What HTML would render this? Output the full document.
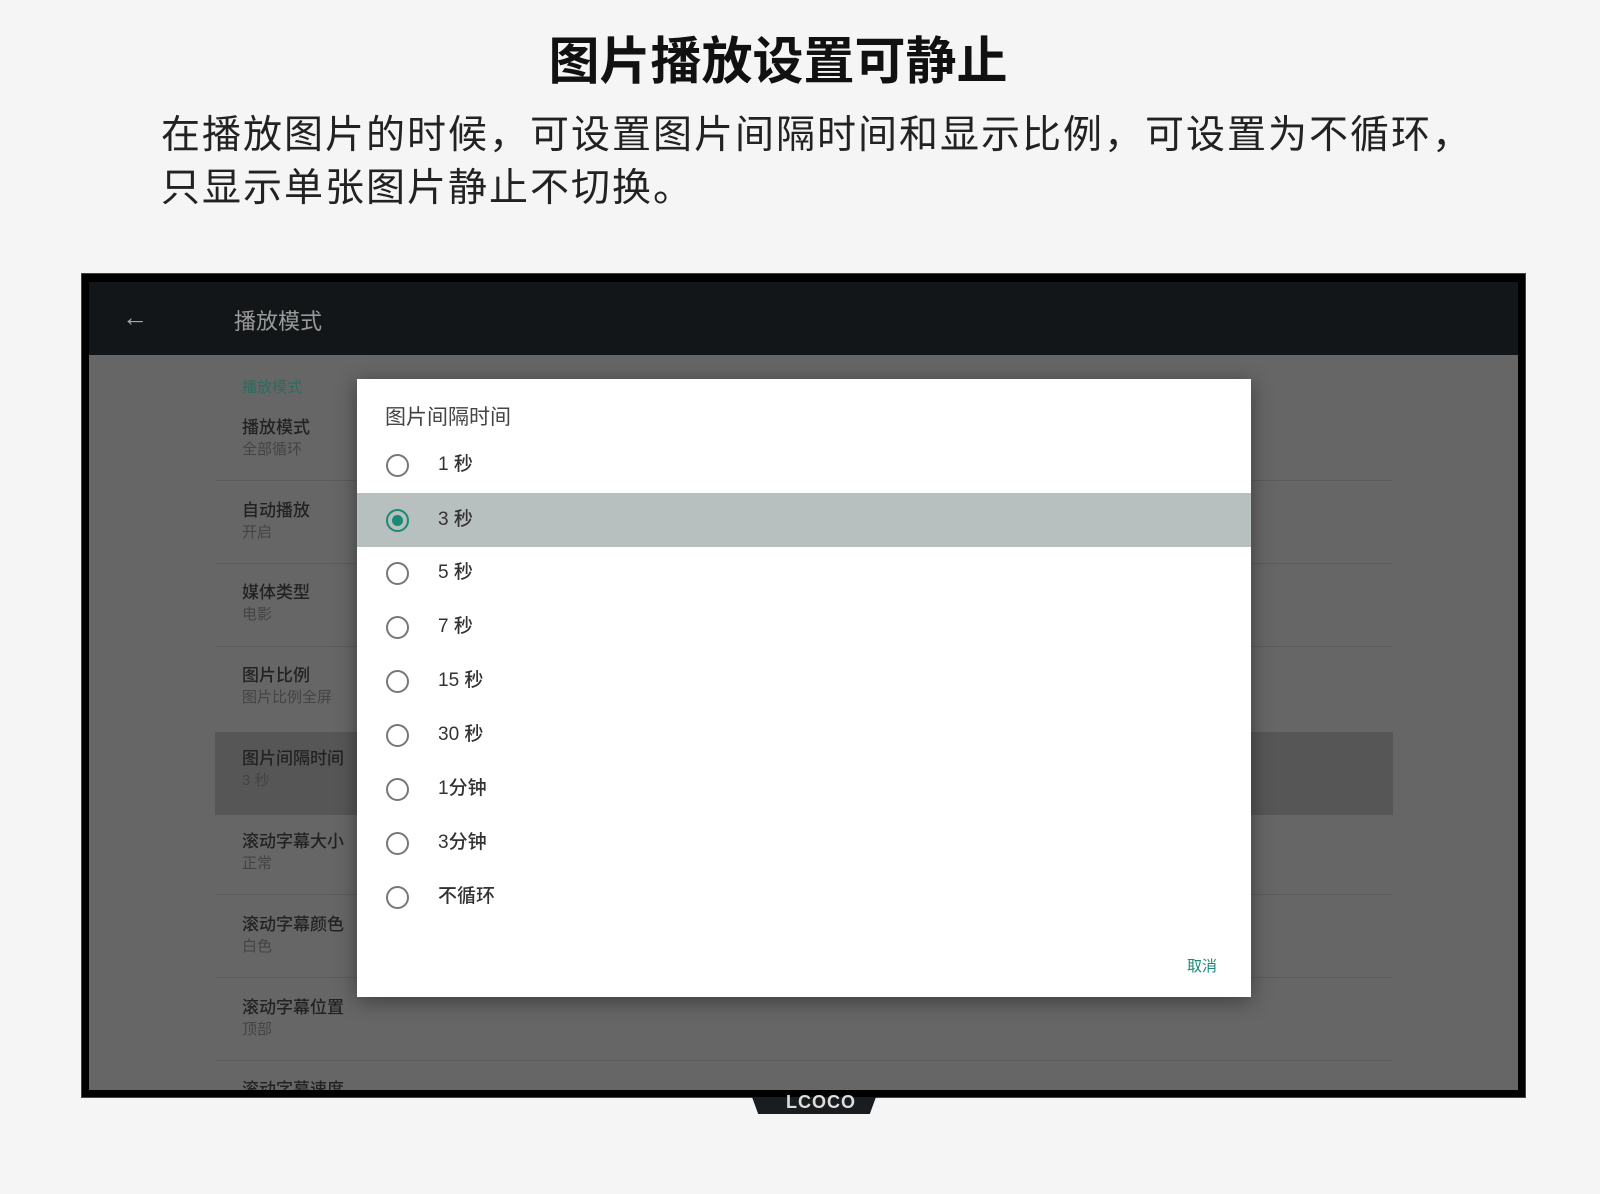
<!DOCTYPE html>
<html><head><meta charset="utf-8"><style>
*{margin:0;padding:0;box-sizing:border-box}
body{width:1600px;height:1194px;background:#f4f5f4;position:relative;overflow:hidden;font-family:"Liberation Sans","Noto Sans CJK SC",sans-serif}
.a{position:absolute;white-space:nowrap}
h1{position:absolute;left:0;width:1556px;text-align:center;top:32px;font-size:51px;font-weight:bold;color:#111;line-height:60px}
.p{left:161px;font-size:39px;color:#222;line-height:50px;letter-spacing:2px}
.tv{position:absolute;left:81px;top:273px;width:1445px;height:825px;background:#000;border:1px solid #444}
.scr{position:absolute;left:7px;top:8px;width:1429px;height:808px;background:#666;overflow:hidden}
.hd{position:absolute;left:0;top:0;width:100%;height:73px;background:#131618}
.it{position:absolute;left:153px;font-size:17px;color:#222;line-height:22px;font-weight:500}
.it span{display:block;font-size:15px;color:#444;font-weight:normal}
.ln{position:absolute;left:126px;width:1178px;height:1px;background:#5c5c5c}
.dl{position:absolute;left:357px;top:379px;width:894px;height:618px;background:#fff;box-shadow:0 4px 20px rgba(0,0,0,.4)}
.r{position:absolute;left:0;width:100%;height:54px}
.r i{position:absolute;left:29px;top:16px;width:23px;height:23px;border:2px solid #777;border-radius:50%}
.r b{position:absolute;left:81px;top:14px;font-size:19px;font-weight:500;color:#333;line-height:26px}
</style></head><body>
<h1>图片播放设置可静止</h1>
<div class="a p" style="top:111px">在播放图片的时候，可设置图片间隔时间和显示比例，可设置为不循环，</div>
<div class="a p" style="top:164px">只显示单张图片静止不切换。</div>
<div class="tv"><div class="scr">
<div class="hd"><div class="a" style="left:33px;top:20px;font-size:26px;color:#aaa">←</div><div class="a" style="left:145px;top:22px;font-size:22px;color:#999">播放模式</div></div>
<div class="a" style="left:153px;top:94px;font-size:15px;color:#2d6b5f">播放模式</div>
<div style="position:absolute;left:126px;top:450px;width:1178px;height:83px;background:#565656"></div>
<div class="it" style="top:135px">播放模式<span>全部循环</span></div>
<div class="ln" style="top:198px"></div>
<div class="it" style="top:218px">自动播放<span>开启</span></div>
<div class="ln" style="top:281px"></div>
<div class="it" style="top:300px">媒体类型<span>电影</span></div>
<div class="ln" style="top:364px"></div>
<div class="it" style="top:383px">图片比例<span>图片比例全屏</span></div>
<div class="it" style="top:466px">图片间隔时间<span>3 秒</span></div>
<div class="it" style="top:549px">滚动字幕大小<span>正常</span></div>
<div class="ln" style="top:612px"></div>
<div class="it" style="top:632px">滚动字幕颜色<span>白色</span></div>
<div class="ln" style="top:695px"></div>
<div class="it" style="top:715px">滚动字幕位置<span>顶部</span></div>
<div class="ln" style="top:778px"></div>
<div class="it" style="top:797px">滚动字幕速度</div>
</div></div>
<div style="position:absolute;left:752px;top:1097px;width:124px;height:17px;background:#1a1d1f;clip-path:polygon(0 0,100% 0,95% 100%,5% 100%)"></div>
<div class="a" style="left:786px;top:1092px;font-size:18px;font-weight:bold;color:#ddd;letter-spacing:1px">LCOCO</div>
<div class="dl">
<div class="a" style="left:28px;top:22px;font-size:21px;color:#444">图片间隔时间</div>
<div class="r" style="top:59px"><i></i><b>1 秒</b></div>
<div class="r" style="top:114px;background:#b7bfbf"><i style="border-color:#1a8a77"><em style="position:absolute;left:4px;top:4px;width:11px;height:11px;border-radius:50%;background:#1a8a77"></em></i><b>3 秒</b></div>
<div class="r" style="top:167px"><i></i><b>5 秒</b></div>
<div class="r" style="top:221px"><i></i><b>7 秒</b></div>
<div class="r" style="top:275px"><i></i><b>15 秒</b></div>
<div class="r" style="top:329px"><i></i><b>30 秒</b></div>
<div class="r" style="top:383px"><i></i><b>1分钟</b></div>
<div class="r" style="top:437px"><i></i><b>3分钟</b></div>
<div class="r" style="top:491px"><i></i><b>不循环</b></div>
<div class="a" style="left:830px;top:576px;font-size:15px;color:#1a8a77">取消</div>
</div>
</body></html>
